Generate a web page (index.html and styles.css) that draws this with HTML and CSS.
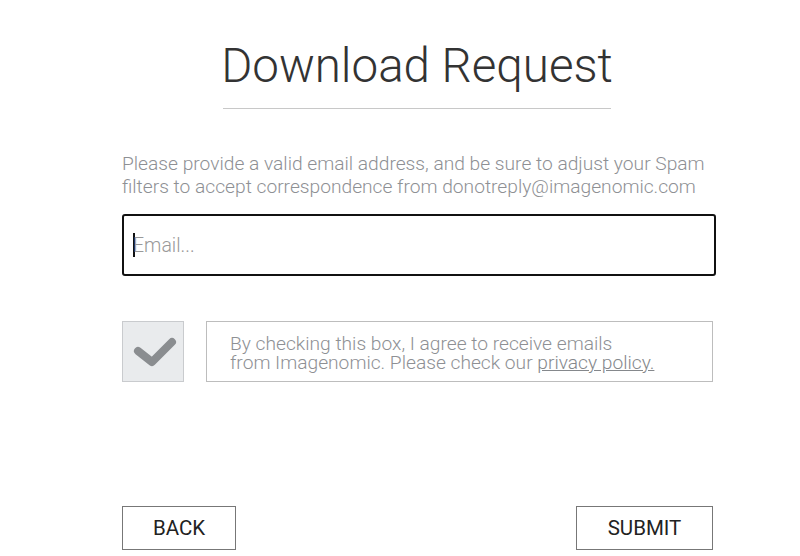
FILE: index.html
```html
<!DOCTYPE html>
<html>
<head>
<meta charset="utf-8">
<link rel="stylesheet" href="styles.css">
</head>
<body>
<div class="wrap">
  <h1 class="title">Download Request</h1>
  <div class="rule"></div>
  <p class="intro">Please provide a valid email address, and be sure to adjust your Spam filters to accept correspondence from donotreply@imagenomic.com</p>
  <div class="field"><span class="caret"></span><span class="ph">Email...</span></div>
  <div class="consent">
    <div class="check">
      <svg width="62" height="61" viewBox="0 0 62 61"><path d="M16 30 L30 41 L50 21" fill="none" stroke="#8a8d90" stroke-width="8" stroke-linecap="round" stroke-linejoin="round"/></svg>
    </div>
    <div class="agree">By checking this box, I agree to receive emails<br>from Imagenomic. Please check our <span class="link">privacy policy.</span></div>
  </div>
  <div class="actions">
    <div class="btn back">BACK</div>
    <div class="btn submit">SUBMIT</div>
  </div>
</div>
</body>
</html>
```
FILE: styles.css
```css
html, body { margin: 0; padding: 0; background: #fff; }
body { font-family: Roboto, "Open Sans", sans-serif; }
.wrap { width: 594px; margin-left: 122px; display: flex; flex-direction: column; }
.title { font-weight: 300; font-size: 47.5px; color: #333; margin: 36px 0 0 0; padding-right: 4px; text-align: center; line-height: 60px; }
.rule { width: 388px; height: 1px; background: #c8c8c8; margin: 12px 0 0 101px; }
.intro { margin: 43px 0 0 0; font-weight: 300; font-size: 19.2px; line-height: 23px; color: #8e9094; }
.field { margin-top: 16px; height: 58px; border: 2px solid #111; border-radius: 3px; display: flex; align-items: center; padding-left: 9px; width: 581px; }
.caret { width: 2px; height: 24px; background: #111; }
.ph { font-weight: 300; font-size: 19.5px; color: #999; margin-left: -2px; }
.consent { margin-top: 45px; display: flex; gap: 22px; width: 591px; }
.check { width: 60px; height: 59px; border: 1px solid #c9cbce; background: #e9ebed; }
.check svg { display: block; margin: -1px; }
.agree { flex: 1; border: 1px solid #bdbdbd; padding: 12px 0 0 23px; box-sizing: border-box; height: 61px; font-weight: 300; font-size: 19.2px; line-height: 19px; color: #8e9094; }
.link { text-decoration: underline; color: #85888c; }
.actions { margin-top: 124px; display: flex; justify-content: space-between; width: 591px; }
.btn { height: 42px; border: 1px solid #777; display: flex; align-items: center; justify-content: center; font-size: 20.5px; color: #222; font-weight: 400; }
.back { width: 112px; }
.submit { width: 135px; }
```
